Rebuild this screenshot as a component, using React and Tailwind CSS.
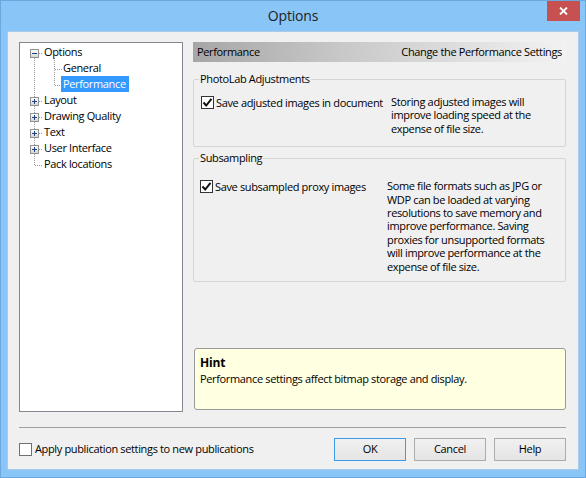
const FONT = { fontFamily: '"Open Sans", "Noto Sans", sans-serif' };

function CheckBox({ checked, dark }) {
  return (
    <div
      className={`relative h-[13px] w-[13px] shrink-0 border bg-white ${dark ? 'border-[#333333]' : 'border-[#707070]'}`}
    >
      {checked && (
        <svg className="absolute left-0 top-0" width="11" height="11" viewBox="0 0 11 11">
          <path d="M1.5 5.5 L4.2 8.5 L9.5 1.8" fill="none" stroke="#111" strokeWidth="2" />
        </svg>
      )}
    </div>
  );
}

function ExpandBox({ x, y, minus }) {
  return (
    <g>
      <rect x={x + 0.5} y={y + 0.5} width="8" height="8" fill="url(#boxg)" stroke="#919191" />
      <line x1={x + 2} y1={y + 4.5} x2={x + 7} y2={y + 4.5} stroke="#1e3f7a" />
      {!minus && <line x1={x + 4.5} y1={y + 2} x2={x + 4.5} y2={y + 7} stroke="#1e3f7a" />}
    </g>
  );
}

function Tree() {
  const rows = [
    { label: 'Options', level: 0 },
    { label: 'General', level: 1 },
    { label: 'Performance', level: 1, selected: true },
    { label: 'Layout', level: 0 },
    { label: 'Drawing Quality', level: 0 },
    { label: 'Text', level: 0 },
    { label: 'User Interface', level: 0 },
    { label: 'Pack locations', level: 0 },
  ];
  const dash = '1 1';
  return (
    <div className="relative h-[370px] w-[164px] shrink-0 border border-[#828790] bg-white pt-[1px]">
      <svg className="absolute left-0 top-0" width="164" height="140">
        <defs>
          <linearGradient id="boxg" x1="0" y1="0" x2="0" y2="1">
            <stop offset="0" stopColor="#ffffff" />
            <stop offset="1" stopColor="#d4d4d4" />
          </linearGradient>
        </defs>
        <line x1="14.5" y1="15" x2="14.5" y2="122" stroke="#9a9a9a" strokeDasharray={dash} />
        {[10, 58, 74, 90, 106].map((c) => (
          <line key={c} x1="19" y1={c + 0.5} x2="23" y2={c + 0.5} stroke="#9a9a9a" strokeDasharray={dash} />
        ))}
        <line x1="15" y1="122.5" x2="23" y2="122.5" stroke="#9a9a9a" strokeDasharray={dash} />
        <line x1="34.5" y1="15" x2="34.5" y2="42" stroke="#9a9a9a" strokeDasharray={dash} />
        <line x1="35" y1="26.5" x2="42" y2="26.5" stroke="#9a9a9a" strokeDasharray={dash} />
        <line x1="35" y1="42.5" x2="42" y2="42.5" stroke="#9a9a9a" strokeDasharray={dash} />
        <ExpandBox x={10} y={6} minus />
        {[58, 74, 90, 106].map((c) => (
          <ExpandBox key={c} x={10} y={c - 4} />
        ))}
      </svg>
      <div className="relative">
        {rows.map((r) => (
          <div
            key={r.label}
            className={`flex h-[16px] items-center text-[11px] leading-[16px] tracking-[-0.35px] text-black ${r.level === 0 ? 'pl-[22px]' : 'pl-[41px]'}`}
          >
            <span className={r.selected ? 'bg-[#3399ff] pl-[2px] pr-[3px] text-white' : 'pl-[2px]'}>{r.label}</span>
          </div>
        ))}
      </div>
    </div>
  );
}

function RightPanel() {
  return (
    <div className="flex h-[370px] w-[373px] flex-col">
      <div className="flex h-[20px] shrink-0 items-center justify-between bg-[linear-gradient(to_right,#a6a6a6,#c8c8c8_40%,#f2f2f2)] pl-[4px] pr-[4px] text-[11px] tracking-[-0.35px] text-black">
        <span>Performance</span>
        <span>Change the Performance Settings</span>
      </div>

      <fieldset className="mt-[9px] rounded-[2px] border border-[#d5d5d5]">
        <legend className="ml-[5px] px-[1px] text-[11px] leading-[16px] tracking-[-0.35px] text-black">
          PhotoLab Adjustments
        </legend>
        <div className="flex pb-[11px] pl-[7px] pt-[8px]">
          <div className="flex w-[190px] shrink-0 items-start gap-[2px] pt-[1px]">
            <CheckBox checked dark />
            <span className="text-[11px] leading-[13.4px] tracking-[-0.35px] text-black">Save adjusted images in document</span>
          </div>
          <div className="text-[11px] leading-[13.4px] tracking-[-0.35px] text-black">
            Storing adjusted images will
            <br />
            improve loading speed at the
            <br />
            expense of file size.
          </div>
        </div>
      </fieldset>

      <fieldset className="mt-[3px] rounded-[2px] border border-[#d5d5d5]">
        <legend className="ml-[5px] px-[1px] text-[11px] leading-[16px] tracking-[-0.35px] text-black">
          Subsampling
        </legend>
        <div className="flex pb-[8px] pl-[6px] pt-[13px]">
          <div className="flex w-[187px] shrink-0 items-start gap-[2px] pt-[1px]">
            <CheckBox checked dark />
            <span className="text-[11px] leading-[13.4px] tracking-[-0.35px] text-black">Save subsampled proxy images</span>
          </div>
          <div className="text-[11px] leading-[13.4px] tracking-[-0.35px] text-black">
            Some file formats such as JPG or
            <br />
            WDP can be loaded at varying
            <br />
            resolutions to save memory and
            <br />
            improve performance. Saving
            <br />
            proxies for unsupported formats
            <br />
            will improve performance at the
            <br />
            expense of file size.
          </div>
        </div>
      </fieldset>

      <div className="mb-[2px] ml-[1px] mt-auto h-[62px] rounded-[3px] border border-[#9a9a9a] bg-[#ffffe1] pl-[5px] pt-[6px] text-black">
        <div className="text-[12px] font-bold leading-[16px] tracking-[-0.2px]">Hint</div>
        <div className="text-[11px] leading-[16px] tracking-[-0.35px]">Performance settings affect bitmap storage and display.</div>
      </div>
    </div>
  );
}

function Button({ children, primary }) {
  return (
    <div
      className={`flex h-[23px] w-[72px] items-center justify-center border bg-[linear-gradient(#f0f0f0,#e5e5e5)] text-[11px] tracking-[-0.35px] text-black ${primary ? 'border-[#3c9ae6]' : 'border-[#acacac]'}`}
    >
      {children}
    </div>
  );
}

export default function App() {
  return (
    <div style={FONT} className="relative flex h-[478px] w-[586px] flex-col border border-[#6ba8e0] bg-[#89c5f6]">
      <div className="flex h-[30px] shrink-0 items-center justify-center pb-[1px] text-[14px] tracking-[-0.2px] text-[#222222]">
        Options
      </div>
      <div className="absolute right-[5px] top-0 flex h-[20px] w-[33px] items-center justify-center bg-[#c75050]">
        <svg width="9" height="8" viewBox="0 0 9 8">
          <path d="M1 0.5 L8 7.5 M8 0.5 L1 7.5" stroke="#ffffff" strokeWidth="1.8" />
        </svg>
      </div>
      <div className="mx-[6px] mb-[7px] flex flex-1 flex-col border border-[#a9cbe9] bg-[#f0f0f0] pl-[11px] pr-[12px] pt-[10px]">
        <div className="flex gap-[10px]">
          <Tree />
          <RightPanel />
        </div>
        <div className="mt-[15px] border-t border-[#a0a0a0]" />
        <div className="mt-[10px] flex h-[23px] items-center">
          <div className="flex items-center gap-[3px]">
            <CheckBox />
            <span className="text-[11px] tracking-[-0.35px] text-black">Apply publication settings to new publications</span>
          </div>
          <div className="ml-auto flex gap-[8px]">
            <Button primary>OK</Button>
            <Button>Cancel</Button>
            <Button>Help</Button>
          </div>
        </div>
      </div>
    </div>
  );
}
